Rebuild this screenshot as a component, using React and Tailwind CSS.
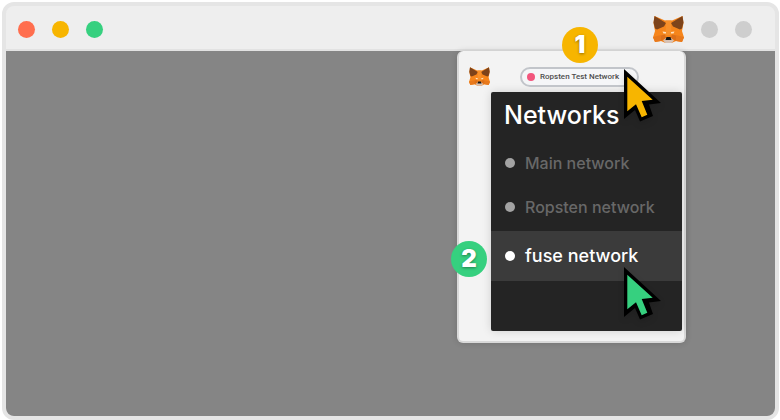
import React from "react";

function Fox({ className }) {
  return (
    <svg viewBox="0 0 62 54" className={className} role="img" aria-label="Fox wallet">
      <path d="M3 0 24 9H38L59 0 61 14 58 30 62 43 58 52 46 50 37 54H25L16 50 4 52 0 43 4 30 1 14Z" fill="#f6851b" />
      <path d="M3 0 26 14 22 21 8 27 4 25 1 13Z" fill="#7d431a" />
      <path d="M59 0 36 14 40 21 54 27 58 25 61 13Z" fill="#7d431a" />
      <path d="M25 9H37L36 16 37 38H25L26 16Z" fill="#f7902a" />
      <path d="M0 42 16 38 16 50 4 52Z" fill="#e8791c" />
      <path d="M62 42 46 38 46 50 58 52Z" fill="#e8791c" />
      <path d="M16 39 24 37 26 44 16 50Z" fill="#dc6f1a" />
      <path d="M46 39 38 37 36 44 46 50Z" fill="#dc6f1a" />
      <path d="M19 31 26 32 26 35 21 35Z" fill="#ffe2bd" />
      <path d="M43 31 36 32 36 35 41 35Z" fill="#ffe2bd" />
      <path d="M20 49 26 44H36L42 49 37 54H25Z" fill="#d7c1b3" />
      <path d="M27 42H35L37 48H25Z" fill="#161616" />
    </svg>
  );
}

function Pointer({ className }) {
  return (
    <svg viewBox="0 0 38 54" className={className} aria-hidden="true">
      <path d="M0 0 37 34 25 35.5 29 47 16 52.5 11 41 0 50Z" fill="#000" />
      <path d="M3.3 7.7 28.7 30.7 17.7 32 23.3 45.7 17.7 48.3 12 35.3 3.3 42.3Z" fill="currentColor" />
    </svg>
  );
}

const networks = [
  { name: "Main network", active: false },
  { name: "Ropsten network", active: false },
  { name: "fuse network", active: true },
];

function Step({ children, className }) {
  return (
    <span
      className={`absolute z-10 flex size-9 items-center justify-center rounded-full text-2xl font-black text-white [text-shadow:0_1px_3px_rgba(0,0,0,0.4)] ${className}`}
    >
      {children}
    </span>
  );
}

function NetworkMenu() {
  return (
    <section className="ml-8 rounded-xs bg-[#242424] pb-[50px] shadow-[0_0_10px_rgba(0,0,0,0.15)]">
      <h1 className="px-[13px] pt-[9px] pb-3 text-[25px] leading-7 font-medium text-white">Networks</h1>
      <ul>
        {networks.map((n) => (
          <li key={n.name} className={n.active ? "pt-[2px]" : ""}>
            <button
              type="button"
              className={`flex w-full items-center gap-[10px] px-[14px] text-left font-medium ${
                n.active ? "h-[50px] bg-[#3b3b3b] text-lg text-white" : "h-11 text-base text-[#686868]"
              }`}
            >
              <span className={`size-[10px] rounded-full ${n.active ? "bg-white" : "bg-[#a3a3a3]"}`} />
              {n.name}
            </button>
          </li>
        ))}
      </ul>
    </section>
  );
}

function WalletPopup() {
  return (
    <div className="relative w-[229px] self-start rounded-md border-2 border-t-0 border-[#d9d9d9] bg-[#f3f3f3] pb-[10px] shadow-[0_0_6px_rgba(0,0,0,0.15)]">
      <div className="flex h-[41px] items-center gap-[30px] pt-[10px] pl-[10px]">
        <Fox className="h-[19px] w-[21px]" />
        <button
          type="button"
          className="flex h-5 w-[119px] items-center gap-[5px] rounded-full border-2 border-[#c2c5ca] bg-[#f5f6f8] px-[5px] font-[family-name:Roboto,sans-serif] text-[8px] font-medium whitespace-nowrap text-[#4d4d4d]"
        >
          <span className="size-2 rounded-full bg-[#f2567d]" />
          Ropsten Test Network
        </button>
      </div>
      <div className="pr-[2px]">
        <NetworkMenu />
      </div>
      <Step className="top-[-24px] left-[103px] bg-[#f7b500]">1</Step>
      <Step className="top-[190px] left-[-8px] bg-[#36d07f]">2</Step>
      <Pointer className="absolute top-[18px] left-[165px] h-[54px] w-[38px] text-[#f7b500] drop-shadow-md" />
      <Pointer className="absolute top-[216px] left-[165px] h-[54px] w-[38px] text-[#36d07f] drop-shadow-md" />
    </div>
  );
}

export default function App() {
  return (
    <div className="min-h-screen bg-white pt-[2px] pr-px pl-[2px] font-[family-name:Inter,sans-serif]">
      <div className="flex min-h-[418px] flex-col overflow-hidden rounded-xl border-4 border-[#e5e5e5] bg-[#e5e5e5]">
        <header className="flex h-[45px] items-center gap-[17px] border-b-2 border-[#e2e2e2] bg-[#eeeeee] pt-[3px] pr-[23px] pl-3">
          <span className="size-[17px] rounded-full bg-[#ff6e4e]" />
          <span className="size-[17px] rounded-full bg-[#f7b500]" />
          <span className="size-[17px] rounded-full bg-[#36d07f]" />
          <Fox className="ml-auto h-[27px] w-[31px]" />
          <span className="size-[17px] rounded-full bg-[#cecece]" />
          <span className="size-[17px] rounded-full bg-[#cecece]" />
        </header>
        <main className="flex flex-1 justify-end rounded-b-md bg-[#858585] pr-[89px]">
          <WalletPopup />
        </main>
      </div>
    </div>
  );
}
